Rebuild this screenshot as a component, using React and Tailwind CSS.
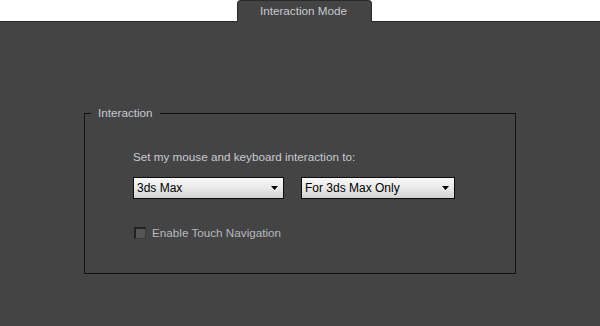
import React from "react";

function Arrow() {
  return (
    <svg width="8" height="5" viewBox="0 0 8 5" className="shrink-0">
      <path d="M0 0 H7 L3.5 4 Z" fill="#000" />
    </svg>
  );
}

function Select({ label, width }) {
  return (
    <div
      className={`${width} h-[22px] border border-[#0e0e0e] bg-gradient-to-b from-[#f7f7f7] via-[#eaeaea] to-[#d2d2d2] flex items-center pl-[3px] pr-[4px] text-black text-[12px]`}
    >
      <span className="flex-1 leading-none">{label}</span>
      <Arrow />
    </div>
  );
}

export default function App() {
  return (
    <div
      className="w-[600px] h-[326px] bg-white flex flex-col text-[11.7px]"
      style={{ fontFamily: "'Liberation Sans', Arial, sans-serif" }}
    >
      <div className="h-[22px] flex shrink-0">
        <div className="w-[237px] border-b border-[#2a2a2a]" />
        <div className="w-[135px] bg-[#444444] border-x border-t border-[#2a2a2a] rounded-t-[4px] flex items-center justify-center text-[#c9c9d0] pb-[1px] pr-[2px]">
          Interaction Mode
        </div>
        <div className="flex-1 border-b border-[#2a2a2a]" />
      </div>
      <div className="flex-1 bg-[#444444] pt-[84px] pl-[84px]">
        <fieldset className="w-[432px] h-[168px] border border-[#111111]">
          <legend className="ml-[6px] px-[7px] text-[#c9c9d0] leading-[14px]">Interaction</legend>
          <div className="pl-[48px] pt-[30px]">
            <div className="text-[#c9c9d0] leading-[14px]">Set my mouse and keyboard interaction to:</div>
            <div className="flex gap-[17px] mt-[13px]">
              <Select label="3ds Max" width="w-[151px]" />
              <Select label="For 3ds Max Only" width="w-[154px]" />
            </div>
            <div className="flex items-center gap-[6px] mt-[27px] ml-[1px]">
              <div className="w-[12px] h-[12px] bg-[#555555] border-t-2 border-l-2 border-[#222222] border-r border-b border-r-[#3a3a3a] border-b-[#3a3a3a]" />
              <span className="text-[#b8b8bf] leading-[14px]">Enable Touch Navigation</span>
            </div>
          </div>
        </fieldset>
      </div>
    </div>
  );
}
